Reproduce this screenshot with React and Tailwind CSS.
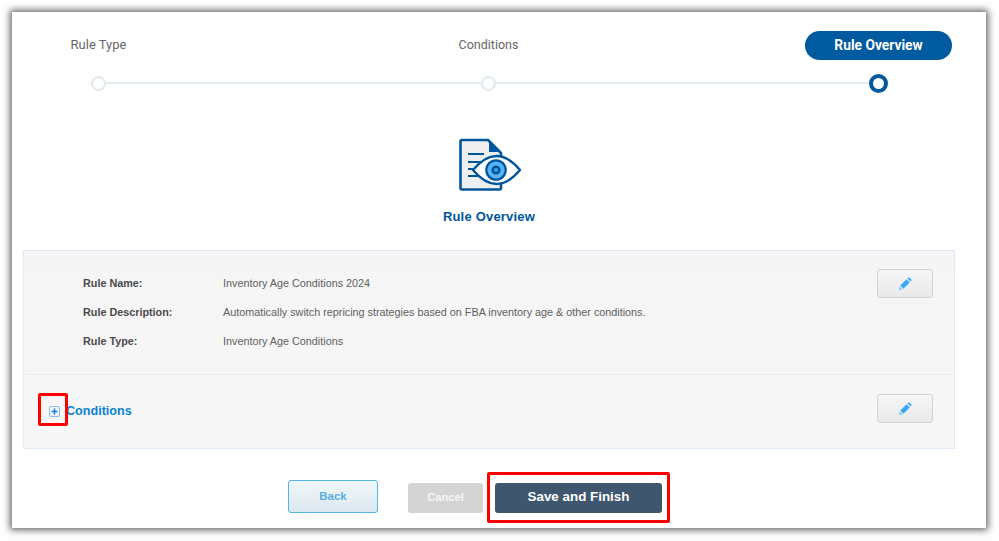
import React from "react";

function Pencil() {
  return (
    <svg width="14" height="14" viewBox="0 0 14 14">
      <path d="M1 13 L1.6 9.4 L4.6 12.4 Z" fill="#7cc8fb" />
      <path d="M2.3 8.6 L8.6 2.3 L11.7 5.4 L5.4 11.7 Z" fill="#38a7f8" />
      <path d="M9.5 1.4 L10.4 0.6 Q11 0.2 11.6 0.7 L13.3 2.4 Q13.8 3 13.3 3.6 L12.5 4.5 Z" fill="#38a7f8" />
    </svg>
  );
}

function EditButton() {
  return (
    <button className="flex h-[29px] w-[56px] items-center justify-center rounded-[3px] border border-[#d2d2d2] bg-gradient-to-b from-[#f6f6f6] to-[#e8e9ea]">
      <Pencil />
    </button>
  );
}

function RuleIcon() {
  return (
    <svg width="64" height="54" viewBox="0 0 64 54" fill="none">
      <path d="M3 2 H29 L42 15 V50 Q42 51.5 40.5 51.5 H3 Q1.5 51.5 1.5 50 V3.5 Q1.5 2 3 2 Z" fill="#efefef" stroke="#00569c" strokeWidth="2.6" strokeLinejoin="round" />
      <path d="M30 3 L41 14 H30 Z" fill="#00569c" />
      <path d="M9 16 H25 M9 24 H22 M9 31 H17 M9 38 H19" stroke="#00569c" strokeWidth="2.2" />
      <path d="M14 32 Q37.5 4 61 32 Q37.5 60 14 32 Z" fill="#fff" stroke="#00569c" strokeWidth="2.4" strokeLinejoin="round" />
      <circle cx="37" cy="32" r="9.7" fill="#58b2f6" stroke="#00569c" strokeWidth="2.2" />
      <circle cx="37" cy="32" r="4.6" fill="#00569c" />
      <circle cx="37" cy="32" r="2" fill="#3fa3ee" />
    </svg>
  );
}

function Info({ label, value, last }) {
  return (
    <div className={last ? "flex h-[28px] items-center" : "flex h-[29px] items-center"}>
      <div className="w-[140px] font-bold text-[#4a4a4a]">{label}</div>
      <div className="text-[#5f5f5f]">{value}</div>
    </div>
  );
}

export default function App() {
  return (
    <div className="h-[541px] w-[999px] overflow-hidden bg-white p-3 [font-family:'Liberation_Sans',Arial,sans-serif]">
      <div className="h-[516px] w-[974px] bg-white pt-[19px] shadow-[0_0_7px_2px_rgba(0,0,0,0.62)]">
        <div className="flex justify-between pl-[13px] pr-[34px] [font-family:Roboto,sans-serif]">
          <div className="flex h-[29px] w-[147px] items-center justify-center pb-[2px] text-[13px] text-[#666]">Rule Type</div>
          <div className="flex h-[29px] w-[147px] items-center justify-center pb-[1px] text-[12.5px] text-[#666]">Conditions</div>
          <div className="flex h-[29px] w-[147px] items-center justify-center rounded-full bg-[#005a9f] pb-[1px] text-[13.8px] font-bold text-white">Rule Overview</div>
        </div>

        <div className="mt-[14px] flex h-[19px] items-center pl-[79px] pr-[98px]">
          <div className="h-[15px] w-[15px] shrink-0 rounded-full border-2 border-[#dfe9ee] bg-white" />
          <div className="h-[2px] w-[375px] -translate-y-px bg-[#e3ebef]" />
          <div className="h-[15px] w-[15px] shrink-0 rounded-full border-2 border-[#dfe9ee] bg-white" />
          <div className="h-[2px] flex-1 -translate-y-px bg-[#e3ebef]" />
          <div className="h-[19px] w-[19px] shrink-0 rounded-full border-[4px] border-[#005a9f] bg-white" />
        </div>

        <div className="mt-[45px] flex flex-col items-center pr-[20px]">
          <div className="pl-[3px]"><RuleIcon /></div>
          <div className="mt-[17px] text-[13px] font-bold leading-[16px] tracking-[0.2px] text-[#00569c]">Rule Overview</div>
        </div>

        <div className="mx-[11px] mt-[25px] h-[199px] w-[932px] border border-[#dde9f6] bg-gradient-to-b from-[#f5f5f5] to-[#f7f7f7]">
          <div className="flex h-[124px] justify-between rounded-[3px] border-b border-[#e8e9ea] pl-[59px] pr-[21px] pt-[18px]">
            <div className="text-[10.8px]">
              <Info label="Rule Name:" value="Inventory Age Conditions 2024" />
              <Info label="Rule Description:" value="Automatically switch repricing strategies based on FBA inventory age & other conditions." />
              <Info label="Rule Type:" value="Inventory Age Conditions" last />
            </div>
            <EditButton />
          </div>
          <div className="flex h-[73px] items-start justify-between pl-[25px] pr-[21px] pt-[19px]">
            <div className="relative mt-[9px] flex items-center gap-[6px]">
              <div className="absolute -left-[11px] -top-[10px] h-[33px] w-[30px] rounded-[2px] border-[3px] border-[#ff0000]" />
              <div className="flex h-[11px] w-[11px] items-center justify-center rounded-[2px] border border-[#8fbdea] bg-[#eef5fc]">
                <svg width="7" height="7" viewBox="0 0 7 7"><path d="M3.5 0.5 V6.5 M0.5 3.5 H6.5" stroke="#1b7fd4" strokeWidth="1.6" /></svg>
              </div>
              <div className="text-[12.6px] font-bold leading-[16px] text-[#0c82d3]">Conditions</div>
            </div>
            <EditButton />
          </div>
        </div>

        <div className="mt-[31px] flex items-start pl-[276px]">
          <button className="flex h-[33px] w-[90px] items-center justify-center rounded-[3px] border border-[#54b6e8] bg-gradient-to-b from-[#f1f7fa] to-[#dce8ef] text-[11.5px] font-bold text-[#5aafdf]">Back</button>
          <button className="ml-[30px] mt-[3px] flex h-[30px] w-[75px] items-center justify-center rounded-[3px] bg-[#d4d4d4] pb-[2px] text-[11.2px] font-bold text-[#f6f6f6]">Cancel</button>
          <div className="-mt-[8px] ml-[4px] rounded-[2px] border-[3px] border-[#ff0000] px-[5px] pb-[7px] pt-[8px]">
            <button className="flex h-[30px] w-[167px] items-center justify-center rounded-[3px] bg-[#3f566f] pb-[2px] text-[13.4px] font-bold text-white">Save and Finish</button>
          </div>
        </div>
      </div>
    </div>
  );
}
